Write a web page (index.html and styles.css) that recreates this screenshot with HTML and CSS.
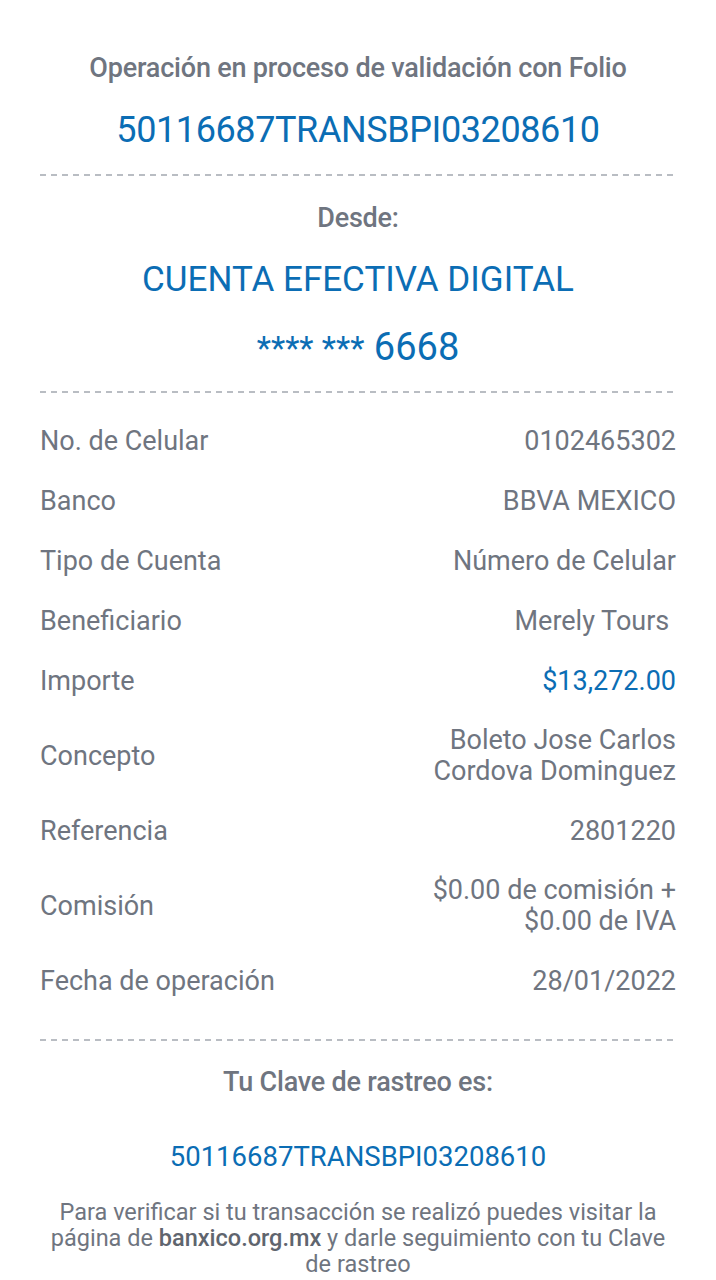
FILE: index.html
```html
<!DOCTYPE html>
<html lang="es">
<head>
    <meta charset="UTF-8">
    <meta name="viewport" content="width=device-width, initial-scale=1.0">
    <title>Comprobante de transferencia</title>
    <link rel="stylesheet" href="styles.css">
</head>
<body>

<!-- Folio Section -->
<div class="section folio">
    <div class="caption">Operación en proceso de validación con Folio</div>
    <div class="folioNumber">50116687TRANSBPI03208610</div>
</div>

<div class="divider"></div>

<!-- Origin Account Section -->
<div class="section origin">
    <div class="caption">Desde:</div>
    <div class="accountName">CUENTA EFECTIVA DIGITAL</div>
    <div class="accountNumber"><span class="stars">**** ***</span> 6668</div>
</div>

<div class="divider"></div>

<!-- Details Section -->
<div class="details">
    <div class="row"><span class="label">No. de Celular</span><span class="value">0102465302</span></div>
    <div class="row"><span class="label">Banco</span><span class="value">BBVA MEXICO</span></div>
    <div class="row"><span class="label">Tipo de Cuenta</span><span class="value">Número de Celular</span></div>
    <div class="row"><span class="label">Beneficiario</span><span class="value">Merely Tours&nbsp;</span></div>
    <div class="row"><span class="label">Importe</span><span class="value amount">$13,272.00</span></div>
    <div class="row"><span class="label">Concepto</span><span class="value multi">Boleto Jose Carlos<br>Cordova Dominguez</span></div>
    <div class="row"><span class="label">Referencia</span><span class="value">2801220</span></div>
    <div class="row"><span class="label">Comisión</span><span class="value multi">$0.00 de comisión +<br>$0.00 de IVA</span></div>
    <div class="row"><span class="label">Fecha de operación</span><span class="value">28/01/2022</span></div>
</div>

<div class="divider"></div>

<!-- Tracking Section -->
<div class="section tracking">
    <div class="caption">Tu Clave de rastreo es:</div>
    <div class="trackingNumber">50116687TRANSBPI03208610</div>
    <p class="note">Para verificar si tu transacción se realizó puedes visitar la página de <b>banxico.org.mx</b> y darle seguimiento con tu Clave de rastreo</p>
</div>

</body>
</html>
```

FILE: styles.css
```css
/* Global Styles */
body {
    margin: 0;
    padding: 0 40px;
    background: #fff;
    font-family: Roboto, "Noto Sans", sans-serif;
    color: #6f7580;
}

.section {
    text-align: center;
}

.caption {
    font-size: 27px;
    font-weight: 500;
    line-height: 32px;
    letter-spacing: -0.2px;
}

/* Folio */
.folio {
    padding-top: 52px;
    padding-bottom: 24px;
}

.folioNumber {
    margin-top: 26px;
    font-size: 36px;
    line-height: 40px;
    color: #0b6db4;
    letter-spacing: -0.4px;
}

/* Divider */
.divider {
    height: 2px;
    background: repeating-linear-gradient(to right, #b9bdc3 0, #b9bdc3 6px, transparent 6px, transparent 11px);
}

/* Origin account */
.origin {
    padding-top: 26px;
    padding-bottom: 24px;
}

.accountName {
    margin-top: 26px;
    font-size: 35px;
    line-height: 40px;
    color: #0b6db4;
}

.accountNumber {
    margin-top: 27px;
    font-size: 38px;
    line-height: 40px;
    height: 40px;
    color: #0b6db4;
}

.stars {
    font-size: 33px;
    line-height: 32px;
}

/* Detail rows */
.details {
    padding: 18px 0 28px;
}

.row {
    display: flex;
    justify-content: space-between;
    align-items: center;
    padding: 14px 0;
    font-size: 27px;
    line-height: 32px;
}

.value {
    text-align: right;
}

.value.multi {
    line-height: 31px;
}

.amount {
    color: #0b6db4;
}

/* Tracking */
.tracking {
    padding-top: 25px;
}

.trackingNumber {
    margin-top: 43px;
    font-size: 27.5px;
    line-height: 32px;
    color: #0b6db4;
}

.note {
    margin: 26px 8px 0;
    font-size: 23.5px;
    line-height: 26px;
}

.note b {
    font-weight: 500;
    color: #5f656e;
}
```
